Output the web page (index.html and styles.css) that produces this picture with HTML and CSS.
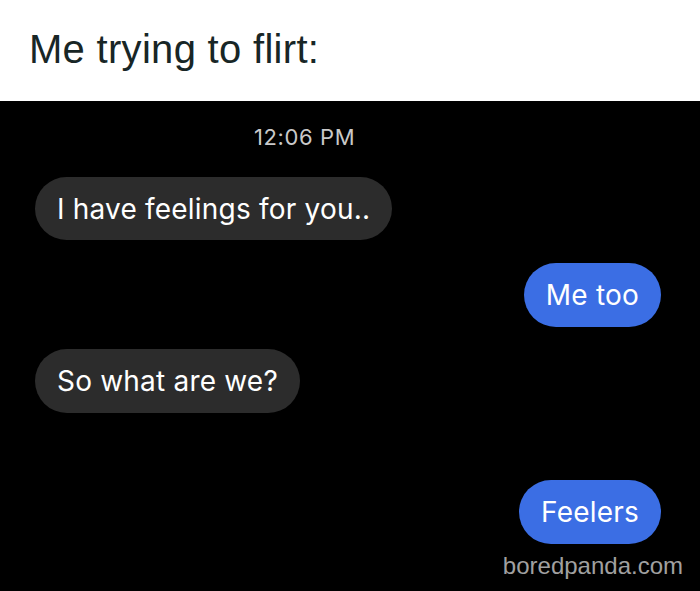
FILE: index.html
```html
<!DOCTYPE html>
<html>
<head>
<meta charset="utf-8">
<link rel="stylesheet" href="styles.css">
</head>
<body>
<div class="page">
  <header class="caption">
    <h1 class="caption-text">Me trying to flirt:</h1>
  </header>
  <main class="chat">
    <div class="time">12:06 PM</div>
    <div class="bubble in first">I have feelings for you..</div>
    <div class="bubble out second">Me too</div>
    <div class="bubble in third">So what are we?</div>
    <div class="bubble out fourth">Feelers</div>
    <div class="watermark">boredpanda.com</div>
  </main>
</div>
</body>
</html>
```
FILE: styles.css
```css
html, body {
  margin: 0;
  padding: 0;
  background: #000;
}
.page {
  width: 700px;
  height: 591px;
  display: flex;
  flex-direction: column;
  overflow: hidden;
}
.caption {
  height: 101px;
  background: #fff;
  display: flex;
  align-items: center;
  padding-left: 29px;
  box-sizing: border-box;
}
.caption-text {
  margin: 0;
  font-family: "Liberation Sans", Arial, sans-serif;
  font-weight: normal;
  font-size: 40px;
  letter-spacing: 0.3px;
  color: #182626;
  line-height: 1;
  padding-bottom: 3px;
}
.chat {
  flex: 1;
  background: #000;
  display: flex;
  flex-direction: column;
  padding: 0 39px 0 35px;
  font-family: Inter, "Noto Sans", sans-serif;
}
.time {
  align-self: flex-start;
  margin-top: 23px;
  margin-left: 219px;
  color: #c9c9c9;
  font-size: 22px;
  line-height: 26px;
  letter-spacing: 0.6px;
}
.bubble {
  height: 63px;
  display: flex;
  align-items: center;
  padding: 0 22px;
  border-radius: 32px;
  color: #fff;
  font-size: 28px;
  letter-spacing: 0.2px;
  box-sizing: border-box;
}
.in {
  align-self: flex-start;
  background: #2c2c2c;
}
.out {
  align-self: flex-end;
  background: #3b6ee4;
}
.first { margin-top: 27px; }
.second { margin-top: 23px; height: 64px; }
.third { margin-top: 22px; height: 64px; }
.fourth { margin-top: 67px; height: 64px; }
.watermark {
  align-self: flex-end;
  margin-right: -22px;
  margin-top: 7px;
  font-family: "Liberation Sans", Arial, sans-serif;
  font-size: 24px;
  color: #a0a0a0;
  line-height: 30px;
}
```
